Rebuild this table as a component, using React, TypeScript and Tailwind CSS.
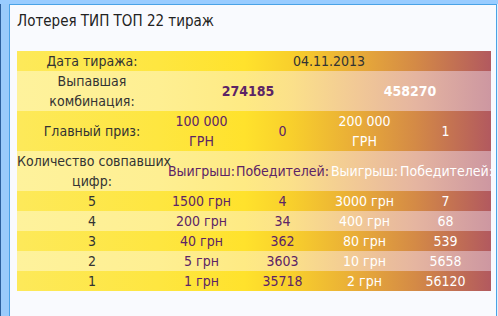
import React from "react";

const bright =
  "bg-[linear-gradient(to_right,#fde95a_0%,#fee640_30%,#ffe22c_48%,#f8cf2c_58%,#e8ab38_72%,#d48a46_84%,#b2595f_100%)]";
const light =
  "bg-[linear-gradient(to_right,#fef29c_0%,#feef92_30%,#feea84_48%,#fbe08a_58%,#f1c896_72%,#e5b5a0_84%,#cd97a1_100%)]";

const cols = "grid grid-cols-[150px_69px_93px_71px_91px]";
const purple = "text-[#5c2466]";
const dark = "text-[#333333]";
const white = "text-white";

function NumRow({ n, a, b, c, d, bg }: { n: string; a: string; b: string; c: string; d: string; bg: string }) {
  return (
    <div className={`${cols} ${bg} h-[20px] leading-[20px] text-center`}>
      <div className={dark}>{n}</div>
      <div className={`${purple} whitespace-nowrap`}>{a}</div>
      <div className={purple}>{b}</div>
      <div className={`${white} whitespace-nowrap`}>{c}</div>
      <div className={white}>{d}</div>
    </div>
  );
}

export default function App() {
  return (
    <div
      className="w-[498px] h-[316px] flex flex-col overflow-hidden bg-[#99ccff]"
      style={{ fontFamily: '"DejaVu Sans Condensed", "DejaVu Sans", sans-serif' }}
    >
      <div className="h-[4px] bg-[#99ccff]" />
      <div className="flex flex-1">
        <div className="w-[1px] bg-[#2c5f9e]" />
        <div className="w-[8px] bg-[#9acbfb]" />
        <div className="w-[1px] bg-[#4aa2e6]" />
        <div className="flex-1 flex flex-col border-t border-[#4aa2e6] bg-[#f9fafe]">
          <div className="pl-[7px] pt-[6px] h-[46px] text-[15px] leading-[20px] text-[#222222]">
            Лотерея ТИП ТОП 22 тираж
          </div>
          <div className="ml-[7px] w-[474px] text-[14px]">
            <div className={`${cols} ${bright} h-[20px] leading-[20px] text-center`}>
              <div className={dark}>Дата тиража:</div>
              <div className={`col-span-4 ${dark}`}>04.11.2013</div>
            </div>
            <div className={`${cols} ${light} h-[40px] leading-[20px] text-center items-center`}>
              <div className={dark}>
                Выпавшая
                <br />
                комбинация:
              </div>
              <div className={`col-span-2 font-bold ${purple}`}>274185</div>
              <div className={`col-span-2 font-bold ${white}`}>458270</div>
            </div>
            <div className={`${cols} ${bright} h-[40px] leading-[20px] text-center items-center`}>
              <div className={dark}>Главный приз:</div>
              <div className={purple}>
                100 000
                <br />
                ГРН
              </div>
              <div className={purple}>0</div>
              <div className={white}>
                200 000
                <br />
                ГРН
              </div>
              <div className={white}>1</div>
            </div>
            <div className={`${cols} ${light} h-[40px] leading-[20px] text-center items-center`}>
              <div className={`${dark} whitespace-nowrap`}>
                Количество совпавших
                <br />
                цифр:
              </div>
              <div className={`${purple} whitespace-nowrap`}>Выигрыш:</div>
              <div className={`${purple} whitespace-nowrap`}>Победителей:</div>
              <div className={`${white} whitespace-nowrap`}>Выигрыш:</div>
              <div className={`${white} whitespace-nowrap`}>Победителей:</div>
            </div>
            <NumRow n="5" a="1500 грн" b="4" c="3000 грн" d="7" bg={bright} />
            <NumRow n="4" a="200 грн" b="34" c="400 грн" d="68" bg={light} />
            <NumRow n="3" a="40 грн" b="362" c="80 грн" d="539" bg={bright} />
            <NumRow n="2" a="5 грн" b="3603" c="10 грн" d="5658" bg={light} />
            <NumRow n="1" a="1 грн" b="35718" c="2 грн" d="56120" bg={bright} />
          </div>
        </div>
        <div className="w-[1px] bg-[#4aa2e6]" />
        <div className="w-[1px] bg-[#e6f0fa]" />
      </div>
    </div>
  );
}
